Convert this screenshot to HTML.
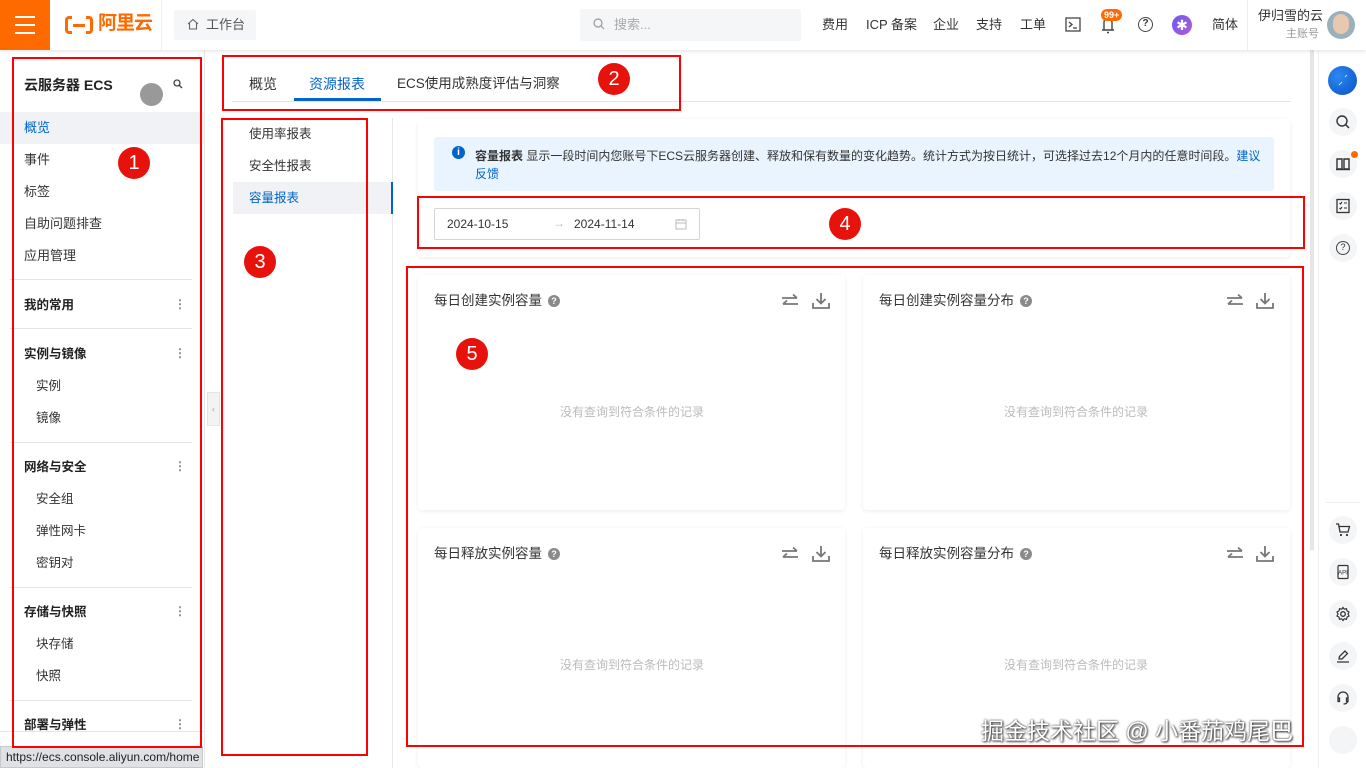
<!DOCTYPE html>
<html><head><meta charset="utf-8">
<style>
*{box-sizing:border-box;margin:0;padding:0}
body{width:1366px;height:768px;overflow:hidden;background:#fff;font-family:"Liberation Sans","Noto Sans CJK SC",sans-serif;font-size:12px;color:#333;position:relative;line-height:1.2}
.a{position:absolute}
.top{left:0;top:0;width:1366px;height:50px;background:#fff;box-shadow:0 1px 4px rgba(0,0,0,.12);z-index:5}
.nav{top:17px;font-size:13px;color:#333}
.side{left:0;top:50px;width:205px;height:718px;background:#fff;border-right:1px solid #e8e8e8}
.si{left:24px;font-size:13px;color:#333}
.sh{left:24px;font-size:12.5px;font-weight:bold;color:#222}
.sub{left:36px;font-size:12.5px;color:#333}
.hr{left:10px;width:182px;height:1px;background:#e5e5e5}
.dots{left:174px;color:#888;font-size:12px;font-weight:bold}
.red{border:2px solid #f00}
.num{width:32px;height:32px;border-radius:50%;background:#e8120c;color:#fff;font-size:20px;text-align:center;line-height:32px}
.card{background:#fff;border-radius:4px;box-shadow:0 1px 4px rgba(0,0,0,.08)}
.ct{font-size:13.5px;color:#333}
.q{display:inline-block;width:12px;height:12px;border-radius:50%;background:#8a8a8a;color:#fff;font-size:9px;text-align:center;line-height:12px;vertical-align:1px;margin-left:6px;font-weight:bold}
.empty{font-size:12px;color:#bbb}
.ri{left:1329px;width:28px;height:28px;border-radius:50%;background:#f4f5f6}
.ri svg{position:absolute;left:6px;top:6px}
</style></head><body>
<div class="a top">
 <div class="a" style="left:0;top:0;width:50px;height:50px;background:#ff6a00"></div>
 <div class="a" style="left:15px;top:16px;width:20px;height:2px;background:#fff"></div>
 <div class="a" style="left:15px;top:24px;width:20px;height:2px;background:#fff"></div>
 <div class="a" style="left:15px;top:32px;width:20px;height:2px;background:#fff"></div>
 <div class="a" style="left:65px;top:16px;width:28px;height:18px;border:3px solid #ff6a00;border-radius:4px"></div>
 <div class="a" style="left:72px;top:12px;width:14px;height:25px;background:#fff"></div>
 <div class="a" style="left:73px;top:24px;width:12px;height:3px;background:#ff6a00"></div>
 <div class="a" style="left:98px;top:13px;font-size:19px;font-weight:bold;color:#ff6a00;letter-spacing:-1px">阿里云</div>
 <div class="a" style="left:161px;top:0;width:1px;height:50px;background:#eee"></div>
 <div class="a" style="left:174px;top:10px;width:82px;height:30px;background:#f5f6f7;border-radius:2px"></div>
 <svg class="a" style="left:187px;top:18px" width="12" height="12" viewBox="0 0 12 12"><path d="M1 6 L6 1.5 L11 6 M2.5 5 V11 H9.5 V5" fill="none" stroke="#666" stroke-width="1.1"/></svg>
 <div class="a" style="left:206px;top:17px;font-size:13px;color:#555">工作台</div>
 <div class="a" style="left:580px;top:9px;width:221px;height:32px;background:#f5f6f7;border-radius:2px"></div>
 <svg class="a" style="left:593px;top:18px" width="12" height="12" viewBox="0 0 12 12"><circle cx="5" cy="5" r="4" fill="none" stroke="#999" stroke-width="1.2"/><path d="M8 8 L11 11" stroke="#999" stroke-width="1.2"/></svg>
 <div class="a" style="left:614px;top:17px;font-size:13px;color:#aaa">搜索...</div>
 <div class="a nav" style="left:822px">费用</div>
 <div class="a nav" style="left:866px">ICP 备案</div>
 <div class="a nav" style="left:933px">企业</div>
 <div class="a nav" style="left:976px">支持</div>
 <div class="a nav" style="left:1020px">工单</div>
 <svg class="a" style="left:1065px;top:17px" width="16" height="15" viewBox="0 0 16 15"><rect x="1" y="1" width="14" height="13" fill="none" stroke="#444" stroke-width="1.3"/><path d="M4 5 L7 7.5 L4 10 M8 11 H12" fill="none" stroke="#444" stroke-width="1.3"/></svg>
 <svg class="a" style="left:1101px;top:16px" width="14" height="18" viewBox="0 0 14 18"><path d="M3 14 V6 a4 4 0 0 1 8 0 V14 M1 14 H13 M6 16.5 H8" fill="none" stroke="#444" stroke-width="1.4"/></svg>
 <div class="a" style="left:1101px;top:9px;padding:0 3px;height:12px;border-radius:6px;background:#ff6a00;color:#fff;font-size:9px;line-height:12px;font-weight:bold">99+</div>
 <div class="a" style="left:1138px;top:17px;width:15px;height:15px;border:1.5px solid #444;border-radius:50%;font-size:10px;text-align:center;line-height:12px;font-weight:bold">?</div>
 <div class="a" style="left:1172px;top:15px;width:20px;height:20px;border-radius:50%;background:linear-gradient(135deg,#6a5cf0,#b45ad6);color:#fff;text-align:center;font-size:14px;line-height:20px">✱</div>
 <div class="a nav" style="left:1212px">简体</div>
 <div class="a" style="left:1247px;top:0;width:1px;height:50px;background:#eee"></div>
 <div class="a" style="left:1258px;top:8px;font-size:13px;color:#333">伊归雪的云</div>
 <div class="a" style="left:1286px;top:28px;font-size:11px;color:#999">主账号</div>
 <div class="a" style="left:1327px;top:11px;width:28px;height:28px;border-radius:50%;background:#9ab0bd"></div>
 <div class="a" style="left:1333px;top:14px;width:16px;height:20px;border-radius:8px;background:#e8c8ae"></div>
</div>

<div class="a side">
 <div class="a" style="left:24px;top:27px;font-size:14px;font-weight:bold;color:#222">云服务器 ECS</div>
 <div class="a" style="left:140px;top:33px;width:23px;height:23px;border-radius:50%;background:#999"></div>
 <svg class="a" style="left:173px;top:29px" width="10" height="10" viewBox="0 0 10 10"><circle cx="4" cy="4" r="3" fill="none" stroke="#444" stroke-width="1.3"/><path d="M6.2 6.2 L9 9" stroke="#444" stroke-width="1.4"/></svg>
 <div class="a" style="left:0;top:62px;width:204px;height:32px;background:#f0f2f5"></div>
 <div class="a si" style="top:70px;color:#0064c8">概览</div>
 <div class="a si" style="top:102px">事件</div>
 <div class="a si" style="top:134px">标签</div>
 <div class="a si" style="top:166px">自助问题排查</div>
 <div class="a si" style="top:198px">应用管理</div>
 <div class="a hr" style="top:229px"></div>
 <div class="a sh" style="top:248px">我的常用</div><div class="a dots" style="top:247px">⋮</div>
 <div class="a hr" style="top:278px"></div>
 <div class="a sh" style="top:297px">实例与镜像</div><div class="a dots" style="top:296px">⋮</div>
 <div class="a sub" style="top:329px">实例</div>
 <div class="a sub" style="top:361px">镜像</div>
 <div class="a hr" style="top:392px"></div>
 <div class="a sh" style="top:410px">网络与安全</div><div class="a dots" style="top:409px">⋮</div>
 <div class="a sub" style="top:442px">安全组</div>
 <div class="a sub" style="top:474px">弹性网卡</div>
 <div class="a sub" style="top:506px">密钥对</div>
 <div class="a hr" style="top:537px"></div>
 <div class="a sh" style="top:555px">存储与快照</div><div class="a dots" style="top:554px">⋮</div>
 <div class="a sub" style="top:587px">块存储</div>
 <div class="a sub" style="top:619px">快照</div>
 <div class="a hr" style="top:650px"></div>
 <div class="a sh" style="top:668px">部署与弹性</div><div class="a dots" style="top:667px">⋮</div>
 <div class="a" style="left:0;top:681px;width:204px;height:1px;background:#e5e5e5"></div>
</div>
<div class="a" style="left:207px;top:392px;width:13px;height:34px;background:#f3f3f3;border:1px solid #e5e5e5;color:#aaa;font-size:9px;line-height:32px;text-align:center">‹</div>
<div class="a" style="left:0;top:746px;width:203px;height:22px;background:#dfe1e5;border:1px solid #c8c8c8;font-size:12px;line-height:20px;padding-left:5px;color:#222">https://ecs.console.aliyun.com/home</div>

<!-- tabs -->
<div class="a" style="left:249px;top:76px;font-size:14px;color:#333">概览</div>
<div class="a" style="left:309px;top:76px;font-size:14px;color:#0064c8">资源报表</div>
<div class="a" style="left:294px;top:98px;width:87px;height:3px;background:#0064c8"></div>
<div class="a" style="left:397px;top:76px;font-size:13.5px;color:#333">ECS使用成熟度评估与洞察</div>
<div class="a" style="left:232px;top:101px;width:1059px;height:1px;background:#e5e5e5"></div>

<!-- submenu -->
<div class="a" style="left:392px;top:118px;width:1px;height:650px;background:#e8e8e8"></div>
<div class="a" style="left:249px;top:127px;font-size:12.5px">使用率报表</div>
<div class="a" style="left:249px;top:159px;font-size:12.5px">安全性报表</div>
<div class="a" style="left:233px;top:182px;width:160px;height:32px;background:#f0f2f5"></div>
<div class="a" style="left:391px;top:182px;width:2px;height:32px;background:#0064c8"></div>
<div class="a" style="left:249px;top:191px;font-size:12.5px;color:#0064c8">容量报表</div>

<!-- info card -->
<div class="a card" style="left:418px;top:119px;width:872px;height:138px"></div>
<div class="a" style="left:434px;top:137px;width:840px;height:54px;background:#eaf4fe;border-radius:3px"></div>
<div class="a" style="left:452px;top:146px;width:13px;height:13px;border-radius:50%;background:#0064c8;color:#fff;font-size:10px;text-align:center;line-height:13px;font-weight:bold">i</div>
<div class="a" style="left:475px;top:147px;width:790px;font-size:12px;line-height:18px;color:#333"><b>容量报表</b> 显示一段时间内您账号下ECS云服务器创建、释放和保有数量的变化趋势。统计方式为按日统计，可选择过去12个月内的任意时间段。<span style="color:#0064c8">建议反馈</span></div>
<div class="a" style="left:434px;top:208px;width:266px;height:32px;border:1px solid #d5d5d5;border-radius:2px"></div>
<div class="a" style="left:447px;top:217px;font-size:12px;color:#333">2024-10-15</div>
<div class="a" style="left:553px;top:216px;font-size:12px;color:#bbb">→</div>
<div class="a" style="left:574px;top:217px;font-size:12px;color:#333">2024-11-14</div>
<svg class="a" style="left:675px;top:218px" width="12" height="12" viewBox="0 0 12 12"><rect x="1" y="2" width="10" height="9" fill="none" stroke="#bbb"/><path d="M1 5 H11 M4 1 V3 M8 1 V3" stroke="#bbb"/></svg>

<!-- chart cards -->
<div class="a card" style="left:418px;top:275px;width:427px;height:235px"></div>
<div class="a card" style="left:863px;top:275px;width:427px;height:235px"></div>
<div class="a card" style="left:418px;top:528px;width:427px;height:240px"></div>
<div class="a card" style="left:863px;top:528px;width:427px;height:240px"></div>
<div class="a ct" style="left:434px;top:293px">每日创建实例容量<span class="q">?</span></div>
<div class="a ct" style="left:879px;top:293px">每日创建实例容量分布<span class="q">?</span></div>
<div class="a ct" style="left:434px;top:546px">每日释放实例容量<span class="q">?</span></div>
<div class="a ct" style="left:879px;top:546px">每日释放实例容量分布<span class="q">?</span></div>
<svg width="0" height="0" style="position:absolute"><defs>
<g id="sw"><path d="M1 5 H16 M12 1.5 L16 5 M17 11 H2 M6 7.5 L2 11" fill="none" stroke="#777" stroke-width="1.8"/></g>
<g id="dl"><path d="M9 1 V11 M4.5 7 L9 11.5 L13.5 7 M1 11 V16 H17 V11" fill="none" stroke="#777" stroke-width="1.8"/></g>
</defs></svg>
<svg class="a" style="left:781px;top:293px" width="18" height="14"><use href="#sw"/></svg><svg class="a" style="left:812px;top:292px" width="18" height="17"><use href="#dl"/></svg>
<svg class="a" style="left:1226px;top:293px" width="18" height="14"><use href="#sw"/></svg><svg class="a" style="left:1256px;top:292px" width="18" height="17"><use href="#dl"/></svg>
<svg class="a" style="left:781px;top:546px" width="18" height="14"><use href="#sw"/></svg><svg class="a" style="left:812px;top:545px" width="18" height="17"><use href="#dl"/></svg>
<svg class="a" style="left:1226px;top:546px" width="18" height="14"><use href="#sw"/></svg><svg class="a" style="left:1256px;top:545px" width="18" height="17"><use href="#dl"/></svg>
<div class="a empty" style="left:560px;top:405px">没有查询到符合条件的记录</div>
<div class="a empty" style="left:1004px;top:405px">没有查询到符合条件的记录</div>
<div class="a empty" style="left:560px;top:658px">没有查询到符合条件的记录</div>
<div class="a empty" style="left:1004px;top:658px">没有查询到符合条件的记录</div>

<!-- scrollbar & right bar -->
<div class="a" style="left:1310px;top:50px;width:4px;height:500px;background:#e6e6e6"></div>
<div class="a" style="left:1318px;top:50px;width:48px;height:718px;background:#fff;border-left:1px solid #eee"></div>
<div class="a" style="left:1328px;top:66px;width:29px;height:29px;border-radius:50%;background:radial-gradient(circle at 35% 35%,#2b8af0,#0a4fc8)"></div>
<svg class="a" style="left:1336px;top:74px" width="14" height="14"><path d="M9 3 L11 1 M3 11 L6 8" stroke="#bcd8ff" stroke-width="1"/></svg>
<div class="a ri" style="top:108px"><svg width="16" height="16" viewBox="0 0 16 16"><circle cx="7" cy="7" r="5" fill="none" stroke="#333" stroke-width="1.4"/><path d="M10.5 10.5 L14 14" stroke="#333" stroke-width="1.5"/></svg></div>
<div class="a ri" style="top:150px"><svg width="16" height="16" viewBox="0 0 16 16"><path d="M2 3 H7 V13 H2 Z M9 3 H14 V13 H9 Z" fill="none" stroke="#333" stroke-width="1.4"/><path d="M1 13.5 H15" stroke="#333" stroke-width="1.4"/></svg></div>
<div class="a" style="left:1351px;top:151px;width:7px;height:7px;border-radius:50%;background:#ff6a00"></div>
<div class="a ri" style="top:192px"><svg width="16" height="16" viewBox="0 0 16 16"><rect x="2" y="1.5" width="12" height="13" fill="none" stroke="#333" stroke-width="1.3"/><path d="M4.5 5 L5.5 6 L7 4 M9 5 H12 M4.5 10 L5.5 11 L7 9 M9 10 H12" fill="none" stroke="#333" stroke-width="1.1"/></svg></div>
<div class="a ri" style="top:234px"><div class="a" style="left:7px;top:7px;width:14px;height:14px;border:1.5px solid #444;border-radius:50%;font-size:9px;text-align:center;line-height:11px">?</div></div>
<div class="a" style="left:1326px;top:502px;width:34px;height:1px;background:#eee"></div>
<div class="a ri" style="top:516px"><svg width="16" height="16" viewBox="0 0 16 16"><path d="M1 2 H3.5 L5 10 H13 L14.5 4.5 H4" fill="none" stroke="#333" stroke-width="1.3"/><circle cx="6" cy="13" r="1.1" fill="#333"/><circle cx="12" cy="13" r="1.1" fill="#333"/></svg></div>
<div class="a ri" style="top:558px"><svg width="16" height="16" viewBox="0 0 16 16"><rect x="3" y="1.5" width="10" height="13" rx="1" fill="none" stroke="#333" stroke-width="1.2"/><text x="8" y="10.5" font-size="6" text-anchor="middle" font-family="Liberation Sans" fill="#333">API</text></svg></div>
<div class="a ri" style="top:600px"><svg width="16" height="16" viewBox="0 0 16 16"><circle cx="8" cy="8" r="2.3" fill="none" stroke="#333" stroke-width="1.3"/><path d="M8 1.5 L9.3 3.2 L11.5 2.7 L12 4.9 L14 6 L13 8 L14 10 L12 11.1 L11.5 13.3 L9.3 12.8 L8 14.5 L6.7 12.8 L4.5 13.3 L4 11.1 L2 10 L3 8 L2 6 L4 4.9 L4.5 2.7 L6.7 3.2 Z" fill="none" stroke="#333" stroke-width="1.2"/></svg></div>
<div class="a ri" style="top:642px"><svg width="16" height="16" viewBox="0 0 16 16"><path d="M4 11 L4.5 8.5 L10 3 L12.5 5.5 L7 11 Z M2 14 H14" fill="none" stroke="#333" stroke-width="1.3"/></svg></div>
<div class="a ri" style="top:684px"><svg width="16" height="16" viewBox="0 0 16 16"><path d="M3 9 V7 a5 5 0 0 1 10 0 V9 M3 8 H4.5 V11.5 H3 Z M11.5 8 H13 V11.5 H11.5 Z M12.5 11.5 Q12 14 8.5 14" fill="none" stroke="#333" stroke-width="1.3"/></svg></div>
<div class="a ri" style="top:726px"></div>

<!-- annotations -->
<div class="a red" style="left:12px;top:57px;width:190px;height:691px"></div>
<div class="a red" style="left:222px;top:55px;width:459px;height:56px"></div>
<div class="a red" style="left:221px;top:118px;width:147px;height:638px"></div>
<div class="a red" style="left:417px;top:196px;width:888px;height:53px"></div>
<div class="a red" style="left:406px;top:266px;width:898px;height:481px"></div>
<div class="a num" style="left:118px;top:147px">1</div>
<div class="a num" style="left:598px;top:63px">2</div>
<div class="a num" style="left:244px;top:246px">3</div>
<div class="a num" style="left:829px;top:208px">4</div>
<div class="a num" style="left:456px;top:338px">5</div>
<div class="a" style="left:981px;top:718px;font-size:23px;color:#fff;text-shadow:0 0 2px #333,1px 1px 2px #333">掘金技术社区 @ 小番茄鸡尾巴</div>
</body></html>
